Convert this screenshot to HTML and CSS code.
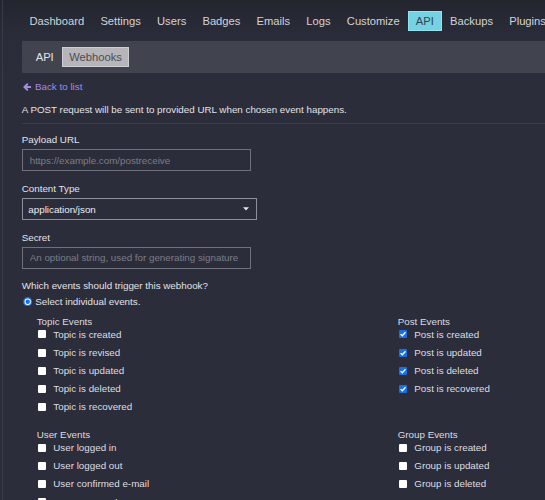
FILE: index.html
```html
<!DOCTYPE html>
<html lang="en">
<head>
<meta charset="utf-8">
<title>Webhooks</title>
<link rel="stylesheet" href="styles.css">
</head>
<body>
<div class="app">
  <nav class="main-nav">
    <a class="nav-item">Dashboard</a>
    <a class="nav-item">Settings</a>
    <a class="nav-item">Users</a>
    <a class="nav-item">Badges</a>
    <a class="nav-item">Emails</a>
    <a class="nav-item">Logs</a>
    <a class="nav-item">Customize</a>
    <a class="nav-item active">API</a>
    <a class="nav-item">Backups</a>
    <a class="nav-item">Plugins</a>
  </nav>
  <div class="sub-nav">
    <a class="sub-item">API</a>
    <a class="sub-item active">Webhooks</a>
  </div>

  <a class="back-link">
    <svg class="back-icon" viewBox="0 0 8 8" width="8" height="8"><path d="M7.3 4H1.8M4.3 1.2L1.4 4L4.3 6.8" fill="none" stroke="#a58be2" stroke-width="1.9" stroke-linecap="round" stroke-linejoin="round"/></svg>
    <span>Back to list</span>
  </a>
  <p class="description">A POST request will be sent to provided URL when chosen event happens.</p>
  <div class="divider"></div>

  <form class="webhook-form">
    <label class="field-label">Payload URL</label>
    <input class="text-input" type="text" placeholder="https://example.com/postreceive">

    <label class="field-label">Content Type</label>
    <div class="select-box">
      <span class="select-value">application/json</span>
      <svg class="caret" viewBox="0 0 6 4" width="6" height="4"><path d="M0 0.3H6L3 3.6Z" fill="#e6e6e6"/></svg>
    </div>

    <label class="field-label">Secret</label>
    <input class="text-input" type="text" placeholder="An optional string, used for generating signature">

    <div class="question">Which events should trigger this webhook?</div>
    <div class="radio-row">
      <svg class="radio" viewBox="0 0 10 10" width="9.4" height="9.4"><circle cx="5" cy="5" r="4.9" fill="#1b6fe4"/><circle cx="5" cy="5" r="3.4" fill="#ffffff"/><circle cx="5" cy="5" r="2.4" fill="#1b6fe4"/></svg>
      <span>Select individual events.</span>
    </div>

    <div class="events">
      <div class="event-group">
        <div class="group-title">Topic Events</div>
        <ul class="event-list">
          <li class="event"><span class="check"></span>Topic is created</li>
          <li class="event"><span class="check"></span>Topic is revised</li>
          <li class="event"><span class="check"></span>Topic is updated</li>
          <li class="event"><span class="check"></span>Topic is deleted</li>
          <li class="event"><span class="check"></span>Topic is recovered</li>
        </ul>
      </div>
      <div class="event-group">
        <div class="group-title">Post Events</div>
        <ul class="event-list">
          <li class="event"><span class="check checked"><svg viewBox="0 0 8 8" width="8" height="8"><path d="M1.6 4.1L3.3 5.8L6.5 2.2" fill="none" stroke="#fff" stroke-width="1.3"/></svg></span>Post is created</li>
          <li class="event"><span class="check checked"><svg viewBox="0 0 8 8" width="8" height="8"><path d="M1.6 4.1L3.3 5.8L6.5 2.2" fill="none" stroke="#fff" stroke-width="1.3"/></svg></span>Post is updated</li>
          <li class="event"><span class="check checked"><svg viewBox="0 0 8 8" width="8" height="8"><path d="M1.6 4.1L3.3 5.8L6.5 2.2" fill="none" stroke="#fff" stroke-width="1.3"/></svg></span>Post is deleted</li>
          <li class="event"><span class="check checked"><svg viewBox="0 0 8 8" width="8" height="8"><path d="M1.6 4.1L3.3 5.8L6.5 2.2" fill="none" stroke="#fff" stroke-width="1.3"/></svg></span>Post is recovered</li>
        </ul>
      </div>
      <div class="event-group">
        <div class="group-title">User Events</div>
        <ul class="event-list">
          <li class="event"><span class="check"></span>User logged in</li>
          <li class="event"><span class="check"></span>User logged out</li>
          <li class="event"><span class="check"></span>User confirmed e-mail</li>
          <li class="event"><span class="check"></span>User approved</li>
        </ul>
      </div>
      <div class="event-group">
        <div class="group-title">Group Events</div>
        <ul class="event-list">
          <li class="event"><span class="check"></span>Group is created</li>
          <li class="event"><span class="check"></span>Group is updated</li>
          <li class="event"><span class="check"></span>Group is deleted</li>
        </ul>
      </div>
    </div>
  </form>
</div>
</body>
</html>
```

FILE: styles.css
```css
html, body {
  margin: 0;
  padding: 0;
  overflow: hidden;
}
body {
  background: linear-gradient(#23252f 0px, #2a2c39 36px, #2b2d3b 80px);
  color: #e0e0e3;
  font-family: "Liberation Sans", Arial, sans-serif;
  font-size: 9.8px;
  min-height: 500px;
}
.app {
  margin-left: 2px;
  border-left: 1px solid #383a48;
  padding: 10.7px 0 0 18.7px;
  width: 760px;
  min-height: 500px;
  box-sizing: border-box;
}
.main-nav {
  display: flex;
  height: 20px;
  white-space: nowrap;
  margin-left: -0.3px;
}
.nav-item {
  display: block;
  padding: 0 8.1px;
  line-height: 20px;
  font-size: 11.2px;
  color: #d3d3d8;
}
.nav-item.active {
  background: #74d2e2;
  color: #2f4553;
  box-shadow: inset 0 0 0 1px #94e2ee;
}
.sub-nav {
  margin-top: 10px;
  height: 32px;
  box-sizing: border-box;
  padding: 6px 7px;
  background: #41434f;
  display: flex;
}
.sub-item {
  display: block;
  padding: 0 7px;
  line-height: 20px;
  font-size: 11.2px;
  color: #e4e4e8;
}
.sub-item.active {
  margin-left: 1.5px;
  background: #b6b6ba;
  color: #4d4d52;
  box-shadow: inset 0 0 0 1px #cfcfd2;
}
.back-link {
  display: flex;
  align-items: center;
  gap: 4px;
  margin-top: 7.3px;
  height: 14px;
  padding-left: 1.3px;
  color: #a58be2;
}
.back-icon {
  display: block;
}
.description {
  margin: 9px 0 0 0;
  line-height: 14px;
  color: #e2e2e6;
}
.divider {
  margin-top: 6.3px;
  height: 1px;
  background: #3b3d4b;
}
.webhook-form {
  display: flex;
  flex-direction: column;
  align-items: flex-start;
}
.field-label {
  display: block;
  margin-top: 10.6px;
  line-height: 14px;
  color: #e2e2e6;
}
.field-label:first-child {
  margin-top: 8.7px;
}
.text-input {
  margin-top: 2.1px;
  width: 229px;
  height: 22.4px;
  box-sizing: border-box;
  padding: 0 7px;
  background: transparent;
  border: 1px solid #6e707b;
  border-radius: 0;
  font-family: "Liberation Sans", Arial, sans-serif;
  font-size: 9.8px;
  color: #e2e2e6;
  outline: none;
}
.text-input::placeholder {
  color: #7c7e87;
}
.select-box {
  margin-top: 2px;
  width: 235.6px;
  height: 22px;
  box-sizing: border-box;
  padding: 0 7px 0 5.6px;
  border: 1px solid #8d8f98;
  display: flex;
  align-items: center;
  justify-content: space-between;
  color: #ededf0;
}
.caret {
  display: block;
  margin-right: 0.5px;
}
.question {
  margin-top: 10px;
  line-height: 14px;
  color: #e2e2e6;
}
.radio-row {
  margin-top: 1.6px;
  height: 14px;
  display: flex;
  align-items: center;
  gap: 3px;
  padding-left: 1.2px;
  color: #e2e2e6;
}
.radio {
  display: block;
}
.events {
  margin: 6px 0 0 15px;
  display: grid;
  grid-template-columns: 361px 361px;
  row-gap: 14.3px;
  align-items: start;
}
.group-title {
  line-height: 14px;
  color: #dcdce0;
}
.event-list {
  list-style: none;
  margin: -1.3px 0 0 0;
  padding: 0;
  display: flex;
  flex-direction: column;
  gap: 4.1px;
}
.event {
  height: 14px;
  display: flex;
  align-items: center;
  color: #dedee2;
}
.check {
  width: 8px;
  height: 8px;
  margin: 0 7.6px 0 1px;
  background: #ffffff;
  border-radius: 1px;
  flex: none;
  display: flex;
}
.check.checked {
  background: #1b6fe4;
}
.check svg {
  display: block;
}
```
